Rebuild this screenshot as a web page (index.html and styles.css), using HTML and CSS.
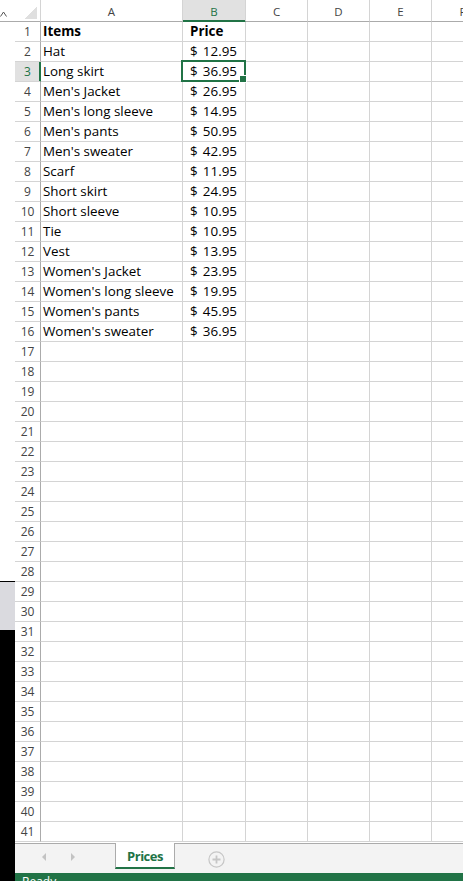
FILE: index.html
```html
<!DOCTYPE html>
<html lang="en">
  <head>
    <meta charset="utf-8">
    <title>Prices</title>
    <link rel="stylesheet" href="styles.css">
  </head>
  <body>
    <div class="app">
      <div class="strip">
        <div class="strip-top">
          <div class="strip-head">
            <svg class="chevron" width="8" height="6" viewBox="0 0 8 6"><polyline points="0.5,5.5 3.5,1 6.5,5.5" fill="none" stroke="#555" stroke-width="1"/></svg>
          </div>
        </div>
        <div class="strip-gray"></div>
        <div class="strip-black"></div>
      </div>

      <div class="excel">
        <div class="sheet">
          <table class="grid">
            <colgroup>
              <col class="c-hdr"><col class="c-a"><col class="c-b"><col class="c-n"><col class="c-n"><col class="c-n"><col class="c-n">
            </colgroup>
            <thead>
              <tr><th class="corner"></th><th class="col">A</th><th class="col sel">B</th><th class="col">C</th><th class="col">D</th><th class="col">E</th><th class="col">F</th></tr>
            </thead>
            <tbody>
              <tr><th>1</th><td class="b">Items</td><td class="money b">Price</td><td></td><td></td><td></td><td></td></tr>
              <tr><th>2</th><td>Hat</td><td class="money"><span class="cur">$</span>12.95</td><td></td><td></td><td></td><td></td></tr>
              <tr><th class="sel">3</th><td>Long skirt</td><td class="money active"><span class="cur">$</span>36.95</td><td></td><td></td><td></td><td></td></tr>
              <tr><th>4</th><td>Men's Jacket</td><td class="money"><span class="cur">$</span>26.95</td><td></td><td></td><td></td><td></td></tr>
              <tr><th>5</th><td>Men's long sleeve</td><td class="money"><span class="cur">$</span>14.95</td><td></td><td></td><td></td><td></td></tr>
              <tr><th>6</th><td>Men's pants</td><td class="money"><span class="cur">$</span>50.95</td><td></td><td></td><td></td><td></td></tr>
              <tr><th>7</th><td>Men's sweater</td><td class="money"><span class="cur">$</span>42.95</td><td></td><td></td><td></td><td></td></tr>
              <tr><th>8</th><td>Scarf</td><td class="money"><span class="cur">$</span>11.95</td><td></td><td></td><td></td><td></td></tr>
              <tr><th>9</th><td>Short skirt</td><td class="money"><span class="cur">$</span>24.95</td><td></td><td></td><td></td><td></td></tr>
              <tr><th>10</th><td>Short sleeve</td><td class="money"><span class="cur">$</span>10.95</td><td></td><td></td><td></td><td></td></tr>
              <tr><th>11</th><td>Tie</td><td class="money"><span class="cur">$</span>10.95</td><td></td><td></td><td></td><td></td></tr>
              <tr><th>12</th><td>Vest</td><td class="money"><span class="cur">$</span>13.95</td><td></td><td></td><td></td><td></td></tr>
              <tr><th>13</th><td>Women's Jacket</td><td class="money"><span class="cur">$</span>23.95</td><td></td><td></td><td></td><td></td></tr>
              <tr><th>14</th><td>Women's long sleeve</td><td class="money"><span class="cur">$</span>19.95</td><td></td><td></td><td></td><td></td></tr>
              <tr><th>15</th><td>Women's pants</td><td class="money"><span class="cur">$</span>45.95</td><td></td><td></td><td></td><td></td></tr>
              <tr><th>16</th><td>Women's sweater</td><td class="money"><span class="cur">$</span>36.95</td><td></td><td></td><td></td><td></td></tr>
              <tr><th>17</th><td></td><td></td><td></td><td></td><td></td><td></td></tr>
              <tr><th>18</th><td></td><td></td><td></td><td></td><td></td><td></td></tr>
              <tr><th>19</th><td></td><td></td><td></td><td></td><td></td><td></td></tr>
              <tr><th>20</th><td></td><td></td><td></td><td></td><td></td><td></td></tr>
              <tr><th>21</th><td></td><td></td><td></td><td></td><td></td><td></td></tr>
              <tr><th>22</th><td></td><td></td><td></td><td></td><td></td><td></td></tr>
              <tr><th>23</th><td></td><td></td><td></td><td></td><td></td><td></td></tr>
              <tr><th>24</th><td></td><td></td><td></td><td></td><td></td><td></td></tr>
              <tr><th>25</th><td></td><td></td><td></td><td></td><td></td><td></td></tr>
              <tr><th>26</th><td></td><td></td><td></td><td></td><td></td><td></td></tr>
              <tr><th>27</th><td></td><td></td><td></td><td></td><td></td><td></td></tr>
              <tr><th>28</th><td></td><td></td><td></td><td></td><td></td><td></td></tr>
              <tr><th>29</th><td></td><td></td><td></td><td></td><td></td><td></td></tr>
              <tr><th>30</th><td></td><td></td><td></td><td></td><td></td><td></td></tr>
              <tr><th>31</th><td></td><td></td><td></td><td></td><td></td><td></td></tr>
              <tr><th>32</th><td></td><td></td><td></td><td></td><td></td><td></td></tr>
              <tr><th>33</th><td></td><td></td><td></td><td></td><td></td><td></td></tr>
              <tr><th>34</th><td></td><td></td><td></td><td></td><td></td><td></td></tr>
              <tr><th>35</th><td></td><td></td><td></td><td></td><td></td><td></td></tr>
              <tr><th>36</th><td></td><td></td><td></td><td></td><td></td><td></td></tr>
              <tr><th>37</th><td></td><td></td><td></td><td></td><td></td><td></td></tr>
              <tr><th>38</th><td></td><td></td><td></td><td></td><td></td><td></td></tr>
              <tr><th>39</th><td></td><td></td><td></td><td></td><td></td><td></td></tr>
              <tr><th>40</th><td></td><td></td><td></td><td></td><td></td><td></td></tr>
              <tr><th>41</th><td></td><td></td><td></td><td></td><td></td><td></td></tr>
            </tbody>
          </table>
        </div>

        <div class="tabs">
          <div class="nav">
            <span class="arrow left"></span>
            <span class="arrow right"></span>
          </div>
          <div class="tab">Prices</div>
          <svg class="add" width="17" height="17" viewBox="0 0 17 17">
            <circle cx="8.5" cy="8.5" r="7.6" fill="none" stroke="#c6c6c6" stroke-width="1.2"/>
            <path d="M8.5 4.5v8M4.5 8.5h8" stroke="#c6c6c6" stroke-width="1.8"/>
          </svg>
        </div>

        <div class="status">Ready</div>
      </div>
    </div>
  </body>
</html>
```

FILE: styles.css
```css
* {
  box-sizing: border-box;
}

html, body {
  margin: 0;
  height: 100%;
}

body {
  overflow: hidden;
  background: #fff;
  font-family: "Open Sans", "Liberation Sans", sans-serif;
}

.app {
  display: flex;
  height: 881px;
  overflow: hidden;
}

/* window edge on the left */
.strip {
  flex: 0 0 15px;
  display: flex;
  flex-direction: column;
}

.strip-top {
  flex: 0 0 582px;
  background: #fff;
  border-bottom: 1px solid #000;
}

.strip-head {
  height: 22px;
  padding-top: 11px;
  border-bottom: 1px solid #ababab;
}

.chevron {
  display: block;
}

.strip-gray {
  flex: 0 0 48px;
  background: #dadadf;
}

.strip-black {
  flex: 1;
  background: #000;
}

.excel {
  flex: 1;
  min-width: 0;
  display: flex;
  flex-direction: column;
  overflow: hidden;
}

.sheet {
  flex: none;
  height: 843px;
  overflow: hidden;
}

/* grid */
.grid {
  table-layout: fixed;
  width: 479px;
  border-collapse: separate;
  border-spacing: 0;
}

.c-hdr { width: 26px; }
.c-a { width: 142px; }
.c-b { width: 63px; }
.c-n { width: 62px; }

.grid th,
.grid td {
  height: 20px;
  padding: 0;
  border-right: 1px solid #d4d4d4;
  border-bottom: 1px solid #d4d4d4;
  white-space: nowrap;
  overflow: hidden;
}

.grid td {
  padding: 0 2px;
  font-size: 13.4px;
  line-height: 19px;
  color: #000;
}

.grid tbody th {
  padding-top: 1px;
  font-size: 12px;
  font-weight: normal;
  line-height: 18px;
  color: #444;
  text-align: center;
  border-right-color: #ababab;
}

.grid thead th {
  height: 22px;
  padding-top: 2px;
  font-size: 11.5px;
  font-weight: normal;
  line-height: 19px;
  color: #444;
  text-align: center;
  border-bottom-color: #ababab;
}

.grid th.corner {
  background: linear-gradient(to bottom right, transparent 50%, #dfdfdf 50%) no-repeat right 3px bottom 2px / 12px 12px;
}

.grid tbody th.sel {
  background: #e1e1e1;
  color: #217346;
  border-right-color: #217346;
  box-shadow: inset -1px 0 #217346;
}

.grid thead th.sel {
  background: #e1e1e1;
  color: #217346;
  border-bottom-color: #217346;
  box-shadow: inset 0 -1px #217346;
}

.grid td.b {
  font-weight: bold;
}

.grid td.money {
  padding: 0 8px 0 7px;
  text-align: right;
}

.grid td.money.b {
  text-align: left;
}

.cur {
  float: left;
}

/* selected cell */
.grid td.active {
  position: relative;
  overflow: visible;
}

.grid td.active::before {
  content: "";
  position: absolute;
  left: -2px;
  top: -2px;
  right: -1px;
  bottom: -1px;
  border: 2px solid #217346;
  z-index: 1;
}

.grid td.active::after {
  content: "";
  position: absolute;
  right: -2px;
  bottom: -2px;
  width: 6px;
  height: 6px;
  background: #217346;
  border: 1px solid #fff;
  z-index: 2;
}

/* sheet tabs */
.tabs {
  flex: none;
  height: 30px;
  display: flex;
  align-items: flex-start;
  background: #f3f3f3;
  border-top: 1px solid #ababab;
}

.nav {
  display: flex;
  gap: 25px;
  padding: 9px 0 0 27px;
}

.arrow {
  width: 0;
  height: 0;
  border-top: 4px solid transparent;
  border-bottom: 4px solid transparent;
}

.arrow.left {
  border-right: 4px solid #c3c3c3;
}

.arrow.right {
  border-left: 4px solid #c3c3c3;
}

.tab {
  width: 60px;
  height: 26px;
  margin: -1px 0 0 40px;
  padding-top: 3px;
  background: #fff;
  border-left: 1px solid #ababab;
  border-right: 1px solid #ababab;
  border-bottom: 2px solid #217346;
  color: #217346;
  font-size: 13px;
  font-weight: bold;
  line-height: 20px;
  letter-spacing: -0.5px;
  text-align: center;
}

.add {
  display: block;
  margin: 7px 0 0 33px;
}

.status {
  flex: none;
  height: 20px;
  padding: 1px 0 0 7px;
  background: #217346;
  color: #fff;
  font-size: 12px;
  line-height: 16px;
}
```
